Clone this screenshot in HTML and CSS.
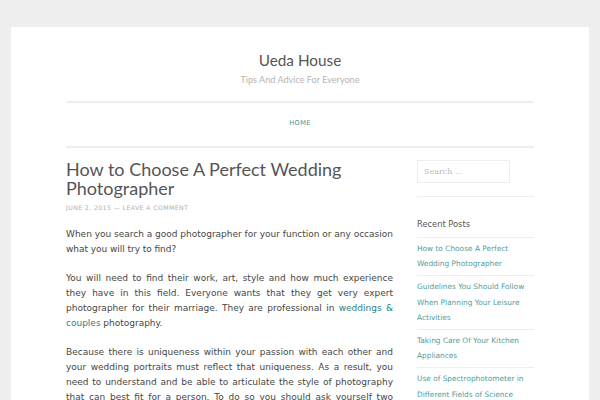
FILE: index.html
```html
<!DOCTYPE html>
<html>
<head>
<meta charset="utf-8">
<link rel="stylesheet" href="styles.css">
</head>
<body>
<div class="page">
  <header class="site-header">
    <h1 class="site-title">Ueda House</h1>
    <p class="site-desc">Tips And Advice For Everyone</p>
  </header>
  <nav class="main-nav"><a href="#">HOME</a></nav>
  <div class="content">
    <main class="main">
      <h2 class="entry-title">How to Choose A Perfect Wedding Photographer</h2>
      <div class="entry-meta">JUNE 2, 2015 &mdash; LEAVE A COMMENT</div>
      <p>When you search a good photographer for your function or any occasion what you will try to find?</p>
      <p>You will need to find their work, art, style and how much experience they&nbsp;have in this field. Everyone wants that they get very expert photographer for their marriage. They are professional in <a href="#">weddings &amp; couples</a> photography.</p>
      <p>Because there is uniqueness within your passion with each other and your wedding portraits must reflect that uniqueness. As a result, you need to understand and be able to articulate the style of photography that can best fit for a person. To do so you should ask yourself two questions.</p>
    </main>
    <aside class="sidebar">
      <div class="search-widget">
        <div class="search-box">Search &hellip;</div>
      </div>
      <div class="widget">
        <h3 class="widget-title">Recent Posts</h3>
        <ul class="recent">
          <li><a href="#">How to Choose A Perfect Wedding Photographer</a></li>
          <li><a href="#">Guidelines You Should Follow When Planning Your Leisure Activities</a></li>
          <li><a href="#">Taking Care Of Your Kitchen Appliances</a></li>
          <li><a href="#">Use of Spectrophotometer in Different Fields of Science</a></li>
        </ul>
      </div>
    </aside>
  </div>
</div>
</body>
</html>
```
FILE: styles.css
```css
html, body { margin: 0; padding: 0; }
body {
  background: #eeeeee;
  font-family: "DejaVu Sans", sans-serif;
  color: #555;
  overflow: hidden;
  height: 400px;
}
.page {
  margin: 27px 11px 0 11px;
  background: #fff;
  padding: 0 55px;
  min-height: 500px;
}
a { color: #2a8080; text-decoration: none; }
.site-header {
  text-align: center;
  padding-top: 22px;
  padding-bottom: 15px;
  border-bottom: 2px solid #eee;
}
.site-title {
  margin: 0;
  font-family: "Lato", sans-serif;
  font-size: 15.3px;
  font-weight: 400;
  line-height: 22px;
  color: #555;
}
.site-desc {
  margin: 3px 0 0 0;
  font-family: "Lato", sans-serif;
  font-size: 9.1px;
  line-height: 12px;
  color: #b5b5b5;
}
.main-nav {
  text-align: center;
  padding: 13px 0 16px 0;
  line-height: 14px;
  border-bottom: 2px solid #eee;
  font-size: 6.6px;
  letter-spacing: 0.4px;
}
.main-nav a { color: #4a9094; }
.content {
  display: flex;
  gap: 24px;
  padding-top: 12px;
}
.main { width: 327px; flex: none; }
.entry-title {
  margin: 0;
  font-family: "Lato", sans-serif;
  font-size: 18px;
  font-weight: 400;
  line-height: 19px;
  color: #555;
}
.entry-meta {
  margin-top: 5px;
  font-size: 6.2px;
  line-height: 10px;
  color: #b0b0b0;
  letter-spacing: 0.4px;
}
.main p {
  margin: 14px 0 0 0;
  font-size: 9px;
  word-spacing: -0.2px;
  line-height: 15px;
  text-align: justify;
  color: #464646;
}
.sidebar { flex: 1; }
.search-widget {
  padding-bottom: 13px;
  border-bottom: 1px solid #eee;
}
.search-box {
  width: 85px;
  height: 21px;
  border: 1px solid #eee;
  font-family: "DejaVu Serif", serif;
  font-size: 8px;
  line-height: 21px;
  padding-left: 6px;
  color: #bbb;
}
.widget-title {
  margin: 0;
  padding: 20px 0 6px 0;
  font-size: 8.3px;
  font-weight: 400;
  line-height: 14px;
  color: #555;
  border-bottom: 1px solid #eee;
}
.recent { list-style: none; margin: 0; padding: 0; }
.recent li {
  font-size: 7.4px;
  line-height: 15.4px;
  padding: 3px 0 3.5px 0;
  border-bottom: 1px solid #eee;
}
.recent a { color: #4f9c9c; }
```
